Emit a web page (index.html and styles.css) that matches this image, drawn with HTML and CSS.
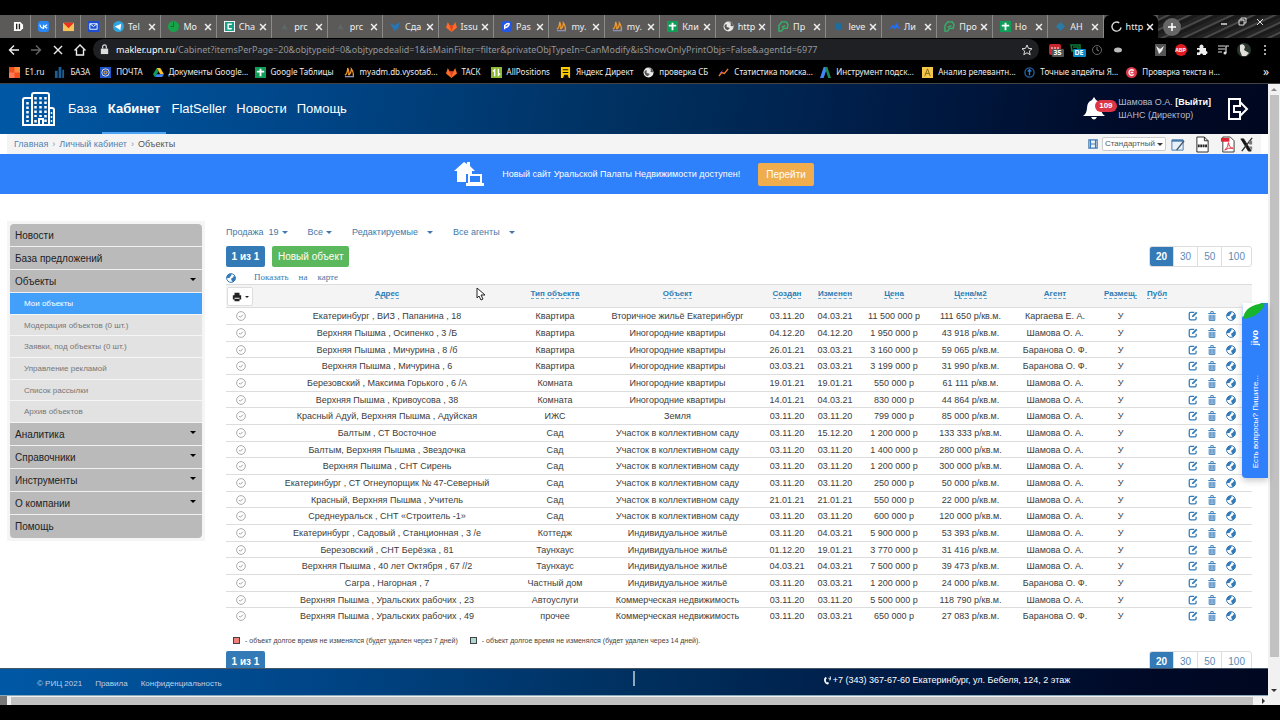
FILE: index.html
```html
<!DOCTYPE html>
<html lang="ru">
<head>
<meta charset="utf-8">
<meta name="viewport" content="width=device-width, initial-scale=1">
<title>Личный кабинет — Объекты</title>
<link rel="stylesheet" href="styles.css">
</head>
<body>
<svg class="sprite" aria-hidden="true">
  <symbol id="x" viewBox="0 0 12 12"><path d="M2.500 2.500l7 7M9.500 2.500l-7 7" stroke="currentColor" stroke-width="1.8" fill="none"/></symbol>
  <symbol id="gitlab" viewBox="0 0 12 12"><path d="M6 12L0 7l2-6 2 4h4l2-4 2 6z" fill="#fc6d26"/><path d="M6 12L4 5h4z" fill="#e24329"/></symbol>
  <symbol id="sheet" viewBox="0 0 12 12"><path d="M0 0h12v12H0z" fill="#0f9d58"/><path d="M6 2v8M2 5h8" stroke="#fff" stroke-width="2"/></symbol>
  <symbol id="pma" viewBox="0 0 12 12"><path d="M1 9Q4 7 4 1q2 4 1 8M5 9q3-2 3-7 3 4 2 8" fill="none" stroke="#f29a2e" stroke-width="1.4"/><path d="M1 10.500h10" stroke="#8b8fb0" stroke-width="1.500"/></symbol>
  <symbol id="world" viewBox="0 0 12 12"><circle cx="6" cy="6" r="5.500" fill="#e8e8e8"/><path d="M2 4q3-1 2 1t2 2-1 3Q2 9 1.500 6zM6 1.500L9 3 8 5l2 1 1-1-1-3z" fill="#555"/></symbol>
  <symbol id="leaf" viewBox="0 0 12 12"><path d="M1 11V5l3-4h5l2 3-1 4H6l-2 3zM4 7l4-2" fill="none" stroke="#34b36a" stroke-width="1.500"/></symbol>
  <symbol id="bird" viewBox="0 0 12 12"><path d="M0 2l5 3 6-4-2 7-4 3-3-5z" fill="#2377b8"/></symbol>
  <symbol id="globe" viewBox="0 0 16 16"><circle cx="8" cy="8" r="7" fill="#fff" stroke="currentColor" stroke-width="1.600"/><path d="M1 8l1-5 4-2 3 1-1 3-2 1 0 2-2 0zM8 9l3-2 2-3 2 3v4l-4 4-2-3z" fill="currentColor"/></symbol>
  <symbol id="edit" viewBox="0 0 16 16"><path d="M10 2H4Q2 2 2 4v8q0 2 2 2h7q2 0 2-2V9" fill="none" stroke="currentColor" stroke-width="2"/><path d="M6 10l1-3 6-6 2 2-6 6z" fill="currentColor"/></symbol>
  <symbol id="trash" viewBox="0 0 16 16"><path d="M2 4h12M6 3V1h4v2M3.500 6v9h9V6M6 6v8M8 6v8M10 6v8" fill="none" stroke="currentColor" stroke-width="1.500"/></symbol>
  <symbol id="check" viewBox="0 0 16 16"><circle cx="8" cy="8" r="7" fill="none" stroke="currentColor" stroke-width="1.300"/><path d="M5 8l2 2 4-4" fill="none" stroke="currentColor" stroke-width="1.500"/></symbol>
</svg>

<div class="browser">
  <div class="tabstrip">
    <div class="pins">
      <span class="pin"><svg viewBox="0 0 12 12"><path d="M1 1h7l3 3v4l-3 3H1z" fill="#fff"/><path d="M4 3v6M7 3v6" stroke="#222" stroke-width="1.500"/></svg></span>
      <span class="pin"><svg viewBox="0 0 12 12"><rect width="12" height="12" rx="3" fill="#2787f5"/><path d="M2 4q1 4 4 4V4M10 4L7 6l3 2" fill="none" stroke="#fff" stroke-width="1.300"/></svg></span>
      <span class="pin"><svg viewBox="0 0 12 12"><path d="M0 2h12v9H0z" fill="#f6c35a"/><path d="M0 2h12L6 8z" fill="#e8331f"/></svg></span>
      <span class="pin"><svg viewBox="0 0 12 12"><path d="M0 0h12v12H0z" fill="#1c4fd0"/><path d="M2 3h8v6H2zM2 3l4 3 4-3" fill="none" stroke="#fff"/></svg></span>
    </div>
    <div class="tabs">
      <div class="tab"><svg viewBox="0 0 12 12"><circle cx="6" cy="6" r="6" fill="#2ca5e0"/><path d="M2 6l7-3-1 7-3-2z" fill="#fff"/></svg><span class="tab-title">Tel</span><button class="close" aria-label="Закрыть"><svg><use href="#x"/></svg></button></div>
      <div class="tab"><svg viewBox="0 0 12 12"><circle cx="6" cy="6" r="6" fill="#16a34a"/><path d="M6 1v5H3" stroke="#0a6b2c" fill="none"/></svg><span class="tab-title">Мо</span><button class="close" aria-label="Закрыть"><svg><use href="#x"/></svg></button></div>
      <div class="tab"><svg viewBox="0 0 12 12"><path d="M0 0h12v12H0z" fill="#fff"/><path d="M1 1h10v10H1z" fill="#1b9e84"/><path d="M8.500 3.500h-4v5h4" fill="none" stroke="#fff" stroke-width="1.500"/></svg><span class="tab-title">Cha</span><button class="close" aria-label="Закрыть"><svg><use href="#x"/></svg></button></div>
      <div class="tab"><svg viewBox="0 0 12 12"><path d="M3 9l3-6 3 6" fill="#5d6868"/></svg><span class="tab-title">prc</span><button class="close" aria-label="Закрыть"><svg><use href="#x"/></svg></button></div>
      <div class="tab"><svg viewBox="0 0 12 12"><path d="M3 9l3-6 3 6" fill="#5d6868"/></svg><span class="tab-title">prc</span><button class="close" aria-label="Закрыть"><svg><use href="#x"/></svg></button></div>
      <div class="tab"><svg><use href="#bird"/></svg><span class="tab-title">Сда</span><button class="close" aria-label="Закрыть"><svg><use href="#x"/></svg></button></div>
      <div class="tab"><svg><use href="#gitlab"/></svg><span class="tab-title">Issu</span><button class="close" aria-label="Закрыть"><svg><use href="#x"/></svg></button></div>
      <div class="tab"><svg viewBox="0 0 12 12"><rect width="12" height="12" rx="4" fill="#2456e6"/><path d="M4 9V5q3-3 5-2-1 4-5 4" stroke="#fff" stroke-width="1.500" fill="none"/></svg><span class="tab-title">Pas</span><button class="close" aria-label="Закрыть"><svg><use href="#x"/></svg></button></div>
      <div class="tab"><svg><use href="#pma"/></svg><span class="tab-title">my.</span><button class="close" aria-label="Закрыть"><svg><use href="#x"/></svg></button></div>
      <div class="tab"><svg><use href="#pma"/></svg><span class="tab-title">my.</span><button class="close" aria-label="Закрыть"><svg><use href="#x"/></svg></button></div>
      <div class="tab"><svg><use href="#sheet"/></svg><span class="tab-title">Кли</span><button class="close" aria-label="Закрыть"><svg><use href="#x"/></svg></button></div>
      <div class="tab"><svg><use href="#world"/></svg><span class="tab-title">http</span><button class="close" aria-label="Закрыть"><svg><use href="#x"/></svg></button></div>
      <div class="tab"><svg><use href="#leaf"/></svg><span class="tab-title">Пр</span><button class="close" aria-label="Закрыть"><svg><use href="#x"/></svg></button></div>
      <div class="tab"><svg viewBox="0 0 12 12"><circle cx="6" cy="6" r="4" fill="#1c6e9c"/></svg><span class="tab-title">leve</span><button class="close" aria-label="Закрыть"><svg><use href="#x"/></svg></button></div>
      <div class="tab"><svg viewBox="0 0 12 12"><path d="M0 9l4-5 2 2 2-4 4 7-4-2-2 2-2-2z" fill="#1f6fff"/></svg><span class="tab-title">Ли</span><button class="close" aria-label="Закрыть"><svg><use href="#x"/></svg></button></div>
      <div class="tab"><svg><use href="#leaf"/></svg><span class="tab-title">Про</span><button class="close" aria-label="Закрыть"><svg><use href="#x"/></svg></button></div>
      <div class="tab"><svg><use href="#sheet"/></svg><span class="tab-title">Но</span><button class="close" aria-label="Закрыть"><svg><use href="#x"/></svg></button></div>
      <div class="tab"><svg viewBox="0 0 12 12"><path d="M1 6l5-5 5 5-5 5z" fill="#2a7aa5"/></svg><span class="tab-title">АН</span><button class="close" aria-label="Закрыть"><svg><use href="#x"/></svg></button></div>
      <div class="tab active"><svg viewBox="0 0 12 12"><path d="M9 2a5 5 0 1 0 2 5" fill="none" stroke="#ddd" stroke-width="1.500"/></svg><span class="tab-title">http</span><button class="close" aria-label="Закрыть"><svg><use href="#x"/></svg></button></div>
    </div>
    <div class="window-controls">
      <button class="new-tab" aria-label="Новая вкладка"><svg viewBox="0 0 12 12"><path d="M6 2v8M2 6h8" stroke="#fff" stroke-width="1.500"/></svg></button>
      <button aria-label="Свернуть"><svg viewBox="0 0 12 12"><path d="M3 8h6" stroke="#ddd" stroke-width="1.500"/></svg></button>
      <button aria-label="Окно"><svg viewBox="0 0 12 12"><path d="M3 4h5v5H3zM5 4V2h5v5H8" stroke="#ddd" fill="none"/></svg></button>
      <button aria-label="Закрыть окно"><svg viewBox="0 0 12 12"><path d="M3 3l6 6M9 3L3 9" stroke="#ddd"/></svg></button>
    </div>
  </div>

  <div class="toolbar">
    <div class="nav-buttons">
      <button aria-label="Назад"><svg viewBox="0 0 12 12"><path d="M11 6H2M6 1.500L1.500 6 6 10.500" fill="none" stroke="#eee" stroke-width="1.400"/></svg></button>
      <button aria-label="Вперёд"><svg viewBox="0 0 12 12"><path d="M1 6h9M6 1.500L10.500 6 6 10.500" fill="none" stroke="#666" stroke-width="1.400"/></svg></button>
      <button aria-label="Остановить"><svg viewBox="0 0 12 12"><path d="M2 2l8 8M10 2l-8 8" stroke="#eee" stroke-width="1.400"/></svg></button>
      <button aria-label="Домой"><svg viewBox="0 0 12 12"><path d="M0.500 6.500L6 1l5.500 5.500M2.500 5.500V11h7V5.500" fill="none" stroke="#eee" stroke-width="1.400"/></svg></button>
    </div>
    <div class="address">
      <svg class="lock" viewBox="0 0 12 12"><path d="M2 5h8v6H2z" fill="#ddd"/><path d="M4 5V3a2 2 0 0 1 4 0v2" fill="none" stroke="#ddd" stroke-width="1.300"/></svg>
      <span class="url"><span class="host">makler.upn.ru</span>/Cabinet?itemsPerPage=20&amp;objtypeid=0&amp;objtypedealid=1&amp;isMainFilter=filter&amp;privateObjTypeIn=CanModify&amp;isShowOnlyPrintObjs=False&amp;agentId=6977</span>
      <svg class="star" viewBox="0 0 12 12"><path d="M6 1l1.500 3.400 3.500.3-2.700 2.400.9 3.600L6 8.800l-3.200 1.900.9-3.600L1 4.700l3.500-.3z" fill="none" stroke="#ddd"/></svg>
    </div>
    <div class="extensions">
      <span class="ext"><svg viewBox="0 0 12 12"><rect width="12" height="11" rx="2" fill="#c9252d"/><path d="M2 4h8" stroke="#fff" stroke-dasharray="2 1"/></svg><span class="ext-badge gray">35</span></span>
      <span class="ext"><svg viewBox="0 0 12 12"><path d="M1 1h9v5L7 9 4 7H2zM3 3h5v3" fill="none" stroke="#0a7a34" stroke-width="1.600"/></svg><span class="ext-badge cyan">DE</span></span>
      <svg viewBox="0 0 12 12"><circle cx="6" cy="6" r="4.500" fill="none" stroke="#666"/><path d="M6 3v3l2 1" stroke="#777" fill="none"/></svg>
      <svg viewBox="0 0 12 12"><ellipse cx="6" cy="6" rx="4" ry="2.500" fill="#bbb"/></svg>
      <span></span>
      <svg viewBox="0 0 12 12"><path d="M1 0h11v12H1z" fill="#555"/><path d="M2 2l4 3 4-3-2 5-3 3z" fill="#eee"/></svg>
      <span class="abp">ABP</span>
      <svg viewBox="0 0 12 12"><path d="M1 4h3a2 2 0 1 1 3 0h3v3a1.500 1.500 0 1 1 0 3v1H7a1.500 1.500 0 1 0-3 0H1V8a1.500 1.500 0 1 0 0-2z" fill="#eee"/></svg>
      <svg viewBox="0 0 12 12"><path d="M1 2h7M1 5h7M1 8h4M9 9V2h3" fill="none" stroke="#ddd" stroke-width="1.200"/><circle cx="8" cy="9" r="1.500" fill="#ddd"/></svg>
      <svg class="avatar" viewBox="0 0 14 14"><circle cx="7" cy="7" r="7" fill="#29372f"/><path d="M3 2q4-2 5 2l-1 3 5 3-3 3H5L3 8z" fill="#e2ded8"/></svg>
      <svg viewBox="0 0 12 12"><circle cx="6" cy="2" r="1" fill="#ddd"/><circle cx="6" cy="6" r="1" fill="#ddd"/><circle cx="6" cy="10" r="1" fill="#ddd"/></svg>
    </div>
  </div>

  <nav class="bookmarks" aria-label="Закладки">
    <a href="#"><svg viewBox="0 0 12 12"><path d="M0 0h12v12H0z" fill="#f0501e"/><path d="M6 0h6v6H6z" fill="#ff8a3c"/><path d="M0 6h6v6H0z" fill="#ff7b55"/></svg><span>E1.ru</span></a>
    <a href="#"><svg viewBox="0 0 12 12"><path d="M1 12V4h3v8M5 12V0h3v12M9 12V3h2v9" fill="#1c5f97"/></svg><span>БАЗА</span></a>
    <a href="#"><svg viewBox="0 0 12 12"><path d="M0 0h12v12H0z" fill="#2056c6"/><circle cx="6" cy="6" r="4" fill="none" stroke="#ddd"/><circle cx="6" cy="6" r="1.600" fill="none" stroke="#f5b042"/></svg><span>ПОЧТА</span></a>
    <a href="#" class="long"><svg viewBox="0 0 12 12"><path d="M4 1h4l4 7H8z" fill="#fbc02d"/><path d="M4 1L0 8l2 3 4-6z" fill="#0f9d58"/><path d="M4 8h8l-2 3H2z" fill="#4285f4"/></svg><span>Документы Google...</span></a>
    <a href="#"><svg><use href="#sheet"/></svg><span>Google Таблицы</span></a>
    <a href="#" class="long"><svg><use href="#pma"/></svg><span>myadm.db.vysotaб...</span></a>
    <a href="#"><svg><use href="#gitlab"/></svg><span>ТАСК</span></a>
    <a href="#"><svg viewBox="0 0 12 12"><path d="M0 0h12v12H0z" fill="#8bb92f"/><path d="M4 10V3L2 5M8 2v7l2-2" stroke="#fff" stroke-width="1.500" fill="none"/></svg><span>AllPositions</span></a>
    <a href="#"><svg viewBox="0 0 12 12"><path d="M1 0h10v12H1z" fill="#ffcc00"/><path d="M3 3h6M3 6h6M4 12l1-3h3l1 3z" stroke="#111" stroke-width="1.200"/></svg><span>Яндекс Директ</span></a>
    <a href="#"><svg><use href="#world"/></svg><span>проверка СБ</span></a>
    <a href="#" class="long"><svg viewBox="0 0 12 12"><path d="M1 10l3-4 3 1 4-5" fill="none" stroke="#f07a28" stroke-width="1.500"/><path d="M2 7l3-3" stroke="#7a4df0"/></svg><span>Статистика поиска...</span></a>
    <a href="#" class="long"><svg viewBox="0 0 12 12"><path d="M4 0h4L4 12H0z" fill="#4285f4"/><path d="M5 0h3l4 12H9z" fill="#188c52"/></svg><span>Инструмент подск...</span></a>
    <a href="#" class="long"><svg viewBox="0 0 12 12"><path d="M0 0h12v12H0z" fill="#f3c84b"/><path d="M3 10l3-8 3 8M4 7h4" fill="none" stroke="#846312"/></svg><span>Анализ релевантн...</span></a>
    <a href="#" class="long"><svg viewBox="0 0 12 12"><circle cx="6" cy="6" r="5" fill="none" stroke="#2464ad" stroke-width="1.400"/><path d="M6 9V3M4 5l2-2 2 2" fill="none" stroke="#2e78c7" stroke-width="1.500"/></svg><span>Точные апдейты Я...</span></a>
    <a href="#" class="long"><svg viewBox="0 0 12 12"><circle cx="6" cy="6" r="6" fill="#e23b4e"/><path d="M8.500 4a3 3 0 1 0 0 4M5 6h3" fill="none" stroke="#fff" stroke-width="1.400"/></svg><span>Проверка текста н...</span></a>
    <button class="more" aria-label="Другие закладки">»</button>
  </nav>

  <div class="viewport">
    <div class="page">
      <header class="site-header">
        <a href="#" class="logo" aria-label="Главная"><svg viewBox="0 0 34 36"><path d="M2 34V9q0-2 2-2h7M11 34V4q0-2 2-2h13q2 0 2 2v30M28 17h3q2 0 2 2v15H1M18 34v-6h4v6" fill="none" stroke="#fff" stroke-width="2"/><path d="M14.500 6v20M19.500 6v20M24.500 6v26M14.500 29v3M6.500 11v20" stroke="#fff" stroke-width="2.500" stroke-dasharray="2.500 2"/><path d="M30.500 21v10" stroke="#fff" stroke-width="1.500" stroke-dasharray="2 2"/></svg></a>
        <nav class="main-nav">
          <a href="#">База</a><a href="#" class="current">Кабинет</a><a href="#">FlatSeller</a><a href="#">Новости</a><a href="#">Помощь</a>
        </nav>
        <div class="account">
          <button class="bell" aria-label="Уведомления"><svg viewBox="0 0 22 24"><path d="M11 0l2 3q5 2 5 8 0 5 4 8H0q4-3 4-8 0-6 5-8z" fill="#fff"/><path d="M8 20h6q-3 5-6 0z" fill="#fff"/></svg><span class="count">109</span></button>
          <div class="user"><div>Шамова О.А. <a href="#">[Выйти]</a></div><div>ШАНС (Директор)</div></div>
          <a href="#" class="logout" aria-label="Выйти"><svg viewBox="0 0 22 24"><path d="M13 6V2H2v20h11v-4" fill="none" stroke="#fff" stroke-width="2"/><path d="M7 9h6V5l7 7-7 7v-4H7z" fill="none" stroke="#fff" stroke-width="2"/></svg></a>
        </div>
      </header>

      <div class="crumb-bar">
        <nav class="crumbs"><a href="#">Главная</a><span>›</span><a href="#">Личный кабинет</a><span>›</span><b>Объекты</b></nav>
        <div class="view-tools">
          <svg class="save" viewBox="0 0 12 12"><path d="M1 1h10v10H1zM3 1v10M9 1v10M3 6h6" fill="none" stroke="#3e79b4" stroke-width="1.400"/></svg>
          <span class="select-wrap"><select aria-label="Вид"><option>Стандартный</option></select><i class="caret"></i></span>
          <button aria-label="Настроить"><svg viewBox="0 0 16 16"><path d="M2 3h12v11H2z" fill="#e8f1fa" stroke="#4879aa"/><path d="M2 3h12v2H2z" fill="#4879aa"/><path d="M7 14l8-10" stroke="#456" stroke-width="1.300"/></svg></button>
          <button class="wide" aria-label="HTML"><svg viewBox="0 0 16 18"><path d="M2 1h8l4 4v12H2zM10 1v4h4" fill="#fff" stroke="#222"/><path d="M3 10.500h10" stroke="#222" stroke-width="3" stroke-dasharray="2 .6"/></svg></button>
          <button class="wide" aria-label="PDF"><svg viewBox="0 0 16 18"><path d="M3 1h8l4 4v12H3z" fill="#fff" stroke="#333"/><path d="M1 2h9v4H1z" fill="#e02234"/><path d="M5 15q4-3 4-8 1 6 5 6-5-1-9 2" fill="none" stroke="#e02234"/></svg></button>
          <button aria-label="Excel"><svg viewBox="0 0 16 18"><path d="M2 3h3l8 13h-3z" fill="#111" stroke="#222"/><path d="M14 2L3 16" stroke="#333" stroke-width="1.500"/><path d="M10 5h4v4h-3zM10 11h4v4z" fill="#777"/></svg></button>
        </div>
      </div>

      <div class="banner">
        <svg viewBox="0 0 30 26"><path d="M0 10L10 1l3 2V1h3v4l5 5h-3v3h-6v8H3V10z" fill="#fff"/><path d="M15 14h12v8H15z" fill="#2f80fb" stroke="#fff" stroke-width="2"/><path d="M12 22h18v3H12z" fill="#fff"/></svg>
        <span>Новый сайт Уральской Палаты Недвижимости доступен!</span>
        <button>Перейти</button>
      </div>

      <main class="content">
        <aside class="sidebar">
          <ul class="menu">
            <li><a href="#">Новости</a></li>
            <li><a href="#">База предложений</a></li>
            <li><a href="#">Объекты<i class="caret"></i></a>
              <ul class="submenu">
                <li class="selected"><a href="#">Мои объекты</a></li>
                <li><a href="#">Модерация объектов (0 шт.)</a></li>
                <li><a href="#">Заявки, под объекты (0 шт.)</a></li>
                <li><a href="#">Управление рекламой</a></li>
                <li><a href="#">Список рассылки</a></li>
                <li><a href="#">Архив объектов</a></li>
              </ul>
            </li>
            <li><a href="#">Аналитика<i class="caret"></i></a></li>
            <li><a href="#">Справочники<i class="caret"></i></a></li>
            <li><a href="#">Инструменты<i class="caret"></i></a></li>
            <li><a href="#">О компании<i class="caret"></i></a></li>
            <li><a href="#">Помощь</a></li>
          </ul>
        </aside>

        <section class="listing">
          <div class="filters">
            <button>Продажа&nbsp; 19<i class="caret near"></i></button>
            <button>Все<i class="caret near"></i></button>
            <button>Редактируемые<i class="caret"></i></button>
            <button>Все агенты<i class="caret"></i></button>
          </div>
          <div class="actions">
            <button class="page-of">1 из 1</button>
            <button class="create">Новый объект</button>
            <div class="page-sizes"><button class="on">20</button><button>30</button><button>50</button><button>100</button></div>
          </div>
          <a href="#" class="map-link"><svg><use href="#globe"/></svg><span>Показать</span><span>на</span><span>карте</span></a>
          <table>
            <colgroup><col class="c-mark"><col class="c-addr"><col class="c-type"><col class="c-obj"><col class="c-date"><col class="c-date"><col class="c-price"><col class="c-sqm"><col class="c-agent"><col class="c-place"><col class="c-pub"><col class="c-act"></colgroup>
            <thead><tr>
              <th><button class="print" aria-label="Печать"><svg viewBox="0 0 12 12"><path d="M3 1h6v3H3zM1 4h10v5H9V7H3v2H1zM3 8h6v3H3z" fill="#222"/></svg><i class="caret"></i></button></th>
              <th><a href="#">Адрес</a></th><th><a href="#">Тип объекта</a></th><th><a href="#">Объект</a></th><th><a href="#">Создан</a></th><th><a href="#">Изменен</a></th><th><a href="#">Цена</a></th><th><a href="#">Цена/м2</a></th><th><a href="#">Агент</a></th><th><a href="#">Размещ.</a></th><th><a href="#">Публ</a></th><th></th>
            </tr></thead>
            <tbody id="rows"></tbody>
          </table>
          <div class="legend"><i class="swatch red"></i><span>- объект долгое время не изменялся (будет удален через 7 дней)</span><i class="swatch teal"></i><span>- объект долгое время не изменялся (будет удален через 14 дней).</span></div>
          <div class="actions">
            <button class="page-of">1 из 1</button>
            <div class="page-sizes"><button class="on">20</button><button>30</button><button>50</button><button>100</button></div>
          </div>
        </section>
      </main>

      <footer class="site-footer">
        <div class="footer-links"><span>© РИЦ 2021</span><a href="#">Правила</a><a href="#">Конфиденциальность</a></div>
        <i class="divider"></i>
        <div class="contacts"><svg viewBox="0 0 12 12"><path d="M4 1Q0 3 2 8q2 4 5 3l1-2-2-1-1 1Q3 6 4 4h1z" fill="#fff"/><path d="M7 3h2v3M9 1h1v4" stroke="#fff" fill="none"/></svg><span>+7 (343) 367-67-60 Екатеринбург, ул. Бебеля, 124, 2 этаж</span></div>
      </footer>

      <button class="chat"><svg class="chat-leaf" viewBox="0 0 26 18"><path d="M0 0h20L0 15z" fill="#fff"/><path d="M1 17Q2 2 24 0 20 14 1 17z" fill="#16b52c"/></svg><span class="chat-label">Есть вопросы? Пишите...</span><span class="chat-brand">jivo</span></button>
      <svg class="cursor" viewBox="0 0 10 14"><path d="M1 1v10l2-2 2 4 2-1-2-4h4z" fill="#fff" stroke="#222"/></svg>
    </div>
    <div class="vbar"><i class="arrow up"></i><div class="vthumb"></div><i class="arrow down"></i></div>
  </div>
  <div class="hbar"><i class="hstart"></i><div class="hthumb"></div><i class="arrow right"></i></div>
</div>
<script src="app.js"></script>
</body>
</html>
```

FILE: styles.css
```css
* { box-sizing: border-box; }
body { margin: 0; background: #000; font-family: "Liberation Sans", Arial, sans-serif; font-size: 10px; color: #3c3c3c; }
button { font: inherit; color: inherit; background: none; border: 0; padding: 0; margin: 0; cursor: pointer; }
a { color: inherit; text-decoration: none; }
ul { list-style: none; margin: 0; padding: 0; }
svg { display: block; flex: none; width: 12px; height: 12px; }
.sprite { position: absolute; width: 0; height: 0; }
.caret { display: inline-block; flex: none; border: 3px solid transparent; border-top-color: currentColor; border-bottom: 0; }

/* Browser frame */
.browser { height: 100vh; display: flex; flex-direction: column; padding: 15px 0; overflow: hidden; }
.tabstrip { display: flex; height: 23px; flex: none; color: #eee; background: #5b5a59; font: 9px/22px "Noto Sans", sans-serif; }
.pins { display: flex; padding-left: 6px; }
.pin { width: 25px; display: flex; align-items: center; justify-content: center; border-right: 1px solid #8a8a8a; }
.pin svg { width: 11px; height: 11px; }
.tabs { display: flex; flex: 1; min-width: 0; }
.tab { flex: 1 1 0; min-width: 0; display: flex; align-items: center; padding: 0 3px 0 7px; border-right: 1px solid #8a8a8a; }
.tab > svg { width: 11px; height: 11px; }
.tab-title { flex: 1; min-width: 0; margin-left: 4px; white-space: nowrap; }
.close { margin-left: 2px; }
.close svg { width: 10px; height: 10px; }
.tab.active { background: #000; border: 0; border-radius: 6px 6px 0 0; }
.window-controls { display: flex; align-items: center; width: 122px; padding-left: 5px; background: repeating-linear-gradient(155deg, #242424 0 3px, #484848 4px 5px, #1b1b1b 6px 9px); }
.window-controls button { width: 18px; display: flex; justify-content: center; align-self: flex-start; padding-top: 1px; }
.window-controls .new-tab { height: 18px; margin-right: 34px; padding: 0; align-items: center; align-self: center; background: #666; border-radius: 50%; }

.toolbar { display: flex; align-items: center; height: 23px; flex: none; padding: 1px 5px 1px 3px; }
.nav-buttons { display: flex; width: 90px; }
.nav-buttons button { width: 22px; display: flex; justify-content: center; }
.address { flex: 1; min-width: 0; display: flex; align-items: center; height: 21px; padding: 0 6px; background: #1f2023; border-radius: 11px; }
.lock { width: 11px; height: 11px; }
.url { flex: 1; min-width: 0; white-space: nowrap; padding-left: 6px; color: #93969a; font: 9px/16px "Noto Sans", sans-serif; }
.host { color: #fff; }
.extensions { display: grid; grid-template-columns: repeat(11, 21px); align-items: center; justify-items: center; padding-left: 5px; }
.ext { position: relative; }
.ext-badge { position: absolute; left: 3px; top: 5px; padding: 0 2px; border-radius: 1px; font: bold 7px/8px "Noto Sans", sans-serif; color: #fff; }
.gray { background: #555; }
.cyan { background: #0b86c9; }
.abp { width: 12px; height: 12px; border-radius: 50%; background: #e01b22; color: #fff; font: bold 5px/12px "Liberation Sans", sans-serif; text-align: center; }
.avatar { width: 14px; height: 14px; }

.bookmarks { display: flex; align-items: center; gap: 10px; height: 22px; flex: none; padding: 0 11px 0 9px; color: #eee; font: 8px/14px "Noto Sans", sans-serif; white-space: nowrap; }
.bookmarks a { display: flex; align-items: center; gap: 5px; }
.bookmarks svg { width: 11px; height: 11px; }
.bookmarks .long { width: 92px; }
.more { margin-left: auto; font-size: 12px; }

/* Page frame */
.viewport { display: flex; flex: 1; min-height: 0; border-top: 1px solid #444; }
.page { position: relative; flex: 1; min-width: 0; display: flex; flex-direction: column; background: #fff; }
.vbar { width: 12px; display: flex; flex-direction: column; align-items: center; justify-content: space-between; background: #f1f1f1; padding: 4px 0; }
.vthumb { width: 9px; flex: 1; margin: 4px 0 32px; background: #c1c1c1; }
.arrow { border: 3px solid transparent; }
.up { border-bottom-color: #888; border-top: 0; }
.down { border-top-color: #333; border-bottom: 0; }
.right { border-left-color: #333; border-right: 0; }
.hbar { display: flex; align-items: center; gap: 9px; height: 9px; flex: none; padding-right: 15px; background: #f1f1f1; }
.hstart { width: 7px; height: 9px; background: #777; margin-right: -5px; }
.hthumb { flex: 1; height: 8px; background: #c1c1c1; }

.site-header, .site-footer { flex: none; color: #fff; background: linear-gradient(100deg, #0058a4 0%, #004587 25%, #00305f 50%, #001c46 70%, #000b29 88%, #000720 100%); }
.site-header { display: flex; align-items: center; height: 50px; padding: 0 19px 0 21px; }
.logo svg { width: 34px; height: 36px; }
.main-nav { display: flex; align-self: stretch; margin-left: 8px; font-size: 13px; line-height: 50px; }
.main-nav a { padding: 0 5px; }
.main-nav .current { font-weight: bold; padding: 0 6px; border-bottom: 2px solid #4ea4f5; }
.account { display: flex; align-items: center; margin-left: auto; }
.bell { position: relative; margin-right: 13px; }
.bell svg { width: 22px; height: 24px; }
.count { position: absolute; left: 12px; top: 3px; padding: 0 4px; border-radius: 6px; background: #dc3545; font: bold 8px/12px "Liberation Sans", sans-serif; }
.user { color: #b5bccb; font-size: 9px; line-height: 13px; }
.user a { color: #fff; font-weight: bold; }
.logout { margin-left: 16px; }
.logout svg { width: 22px; height: 24px; }

.crumb-bar { display: flex; align-items: center; justify-content: space-between; height: 20px; flex: none; margin: 0 7px; padding: 0 7px; background: #f4f4f4; }
.crumbs { display: flex; gap: 4px; color: #8899aa; font-size: 9px; }
.crumbs a { color: #5284b5; }
.crumbs b { font-weight: normal; color: #555; }
.view-tools { display: flex; align-items: center; gap: 4px; }
.view-tools .save { width: 10px; height: 10px; }
.view-tools svg { width: 15px; height: 17px; }
.view-tools .wide { margin-left: 6px; }
.select-wrap { position: relative; }
.select-wrap select { display: block; appearance: none; height: 14px; width: 64px; padding: 0 2px; border: 1px solid #ccc; border-radius: 2px; background: #fff; color: #555; font: 8px/12px "Liberation Sans", sans-serif; }
.select-wrap .caret { position: absolute; right: 3px; top: 6px; }

.banner { display: flex; align-items: center; justify-content: center; gap: 18px; height: 40px; flex: none; background: #2f80fb; color: #fff; font-size: 9px; }
.banner svg { width: 30px; height: 26px; }
.banner button { padding: 0 8px; border-radius: 2px; background: #f0ad4e; font-size: 10px; line-height: 23px; }

/* Content */
.content { flex: 1; min-height: 0; overflow: hidden; display: flex; align-items: flex-start; gap: 21px; padding: 27px 16px 0 7px; }
.sidebar { width: 198px; flex: none; padding: 3px; background: #f5f5f5; }
.menu { border-radius: 4px; overflow: hidden; color: #222; }
.menu > li > a { display: flex; justify-content: space-between; align-items: center; height: 23px; padding: 0 6px 0 5px; background: #bababa; border-bottom: 1px solid #f0f0f0; }
.menu > li:last-child > a { border: 0; }
.menu .caret { color: #000; margin-bottom: 3px; }
.submenu { display: flex; flex-direction: column; height: 130px; font-size: 8px; color: #777; }
.submenu li { flex: 1; display: flex; align-items: center; padding-left: 14px; background: #e2e2e2; border-bottom: 1px solid #f5f5f5; }
.submenu .selected { background: #43a0fa; color: #fff; }

.listing { flex: 1; min-width: 0; }
.filters { display: flex; align-items: center; gap: 20px; height: 21px; color: #4578a8; font-size: 9px; }
.filters .caret { margin-left: 9px; vertical-align: middle; }
.filters .near { margin-left: 3px; }
.actions { display: flex; align-items: center; gap: 7px; padding-top: 4px; }
.actions button { height: 21px; }
.page-of, .create { color: #fff; border-radius: 2px; }
.page-of { width: 39px; background: #337ab7; font-weight: bold; }
.create { padding: 0 6px; background: #5cb85c; }
.page-sizes { display: flex; margin-left: auto; border: 1px solid #ddd; border-radius: 3px; overflow: hidden; color: #5c8ab5; }
.page-sizes button { height: 19px; padding: 0 6px; border-left: 1px solid #ddd; }
.page-sizes .on { background: #337ab7; color: #fff; border: 0; font-weight: bold; }
.map-link { display: flex; align-items: center; gap: 10px; height: 17px; padding-top: 4px; color: #4578a8; font: 9px/13px "Liberation Serif", serif; }
.map-link svg { width: 10px; height: 10px; margin-right: 8px; color: #337ab7; }

table { width: 100%; table-layout: fixed; border-collapse: collapse; text-align: center; white-space: nowrap; font-size: 9px; }
.c-mark { width: 30px; }
.c-addr { width: 262px; }
.c-type { width: 74px; }
.c-obj { width: 171px; }
.c-date { width: 48px; }
.c-price { width: 70px; }
.c-sqm { width: 83px; }
.c-agent { width: 86px; }
.c-place { width: 45px; }
.c-pub { width: 28px; }
.c-act { width: 81px; }
th, td { padding: 0; line-height: 14px; }
th { height: 23px; background: #f4f4f4; border-top: 1px solid #ddd; font-size: 8px; line-height: 10px; vertical-align: top; padding-top: 4px; }
th:first-child { padding-top: 2px; }
th a { color: #2a7db5; border-bottom: 1px dashed #6fa8d0; }
tbody tr { height: 17px; border-top: 1px solid #ddd; }
tbody tr:nth-child(3n) { height: 16px; }
.print { display: flex; align-items: center; justify-content: center; gap: 3px; width: 26px; height: 19px; margin-left: 1px; background: #fff; border: 1px solid #ddd; border-radius: 2px; color: #222; }
.print svg { width: 10px; height: 10px; }
.print .caret { border-width: 2px; border-bottom: 0; }
.mark { width: 10px; height: 10px; margin-left: 10px; color: #999; }
.row-actions { display: flex; gap: 9px; padding-left: 17px; color: #337ab7; }
.row-actions svg { width: 10px; height: 10px; }

.legend { display: flex; align-items: center; gap: 5px; height: 22px; padding: 10px 0 0 7px; font-size: 7px; color: #444; }
.swatch { width: 7px; height: 7px; border: 1px solid #444; }
.red { background: #f08078; }
.teal { background: #a9d8d5; margin-left: 7px; }

.site-footer { display: grid; grid-template-columns: 1fr 2px 1fr; height: 28px; border-top: 1px solid #456; border-bottom: 1px solid #8ab; font-size: 9px; }
.footer-links { display: flex; align-items: center; gap: 13px; padding: 2px 0 0 37px; font-size: 8px; color: #bcd0e6; }
.divider { height: 15px; margin-top: 2px; background: #8fa8c0; }
.contacts { display: flex; justify-content: center; align-items: center; gap: 1px; padding: 0 10px 4px 0; }
.contacts svg { width: 9px; height: 9px; }

/* Floating layer */
.chat { position: absolute; right: 0; top: 219px; width: 26px; height: 175px; display: flex; flex-direction: column-reverse; align-items: center; justify-content: flex-start; gap: 29px; padding: 0 0 10px; border-radius: 4px 0 0 4px; background: #2f80fb; color: #fff; box-shadow: 0 3px 6px #0003; font-size: 8px; }
.chat-leaf { position: absolute; left: 0; top: 0; width: 25px; height: 17px; }
.chat-label, .chat-brand { writing-mode: vertical-rl; transform: rotate(180deg); white-space: nowrap; }
.chat-brand { font-size: 9px; font-weight: bold; }
.cursor { position: absolute; left: 476px; top: 203px; width: 10px; height: 14px; }
```

FILE: app.js
```js
const objects = [
  ["Екатеринбург , ВИЗ , Папанина , 18", "Квартира", "Вторичное жильё Екатеринбург", "03.11.20", "04.03.21", "11 500 000 р", "111 650 р/кв.м.", "Каргаева Е. А."],
  ["Верхняя Пышма , Осипенко , 3 /Б", "Квартира", "Иногородние квартиры", "04.12.20", "04.12.20", "1 950 000 р", "43 918 р/кв.м.", "Шамова О. А."],
  ["Верхняя Пышма , Мичурина , 8 /б", "Квартира", "Иногородние квартиры", "26.01.21", "03.03.21", "3 160 000 р", "59 065 р/кв.м.", "Баранова О. Ф."],
  ["Верхняя Пышма , Мичурина , 6", "Квартира", "Иногородние квартиры", "03.03.21", "03.03.21", "3 199 000 р", "31 990 р/кв.м.", "Баранова О. Ф."],
  ["Березовский , Максима Горького , 6 /А", "Комната", "Иногородние квартиры", "19.01.21", "19.01.21", "550 000 р", "61 111 р/кв.м.", "Шамова О. А."],
  ["Верхняя Пышма , Кривоусова , 38", "Комната", "Иногородние квартиры", "14.01.21", "04.03.21", "830 000 р", "44 864 р/кв.м.", "Шамова О. А."],
  ["Красный Адуй, Верхняя Пышма , Адуйская", "ИЖС", "Земля", "03.11.20", "03.11.20", "799 000 р", "85 000 р/кв.м.", "Шамова О. А."],
  ["Балтым , СТ Восточное", "Сад", "Участок в коллективном саду", "03.11.20", "15.12.20", "1 200 000 р", "133 333 р/кв.м.", "Шамова О. А."],
  ["Балтым, Верхняя Пышма , Звездочка", "Сад", "Участок в коллективном саду", "03.11.20", "03.11.20", "1 400 000 р", "280 000 р/кв.м.", "Шамова О. А."],
  ["Верхняя Пышма , СНТ Сирень", "Сад", "Участок в коллективном саду", "03.11.20", "03.11.20", "1 200 000 р", "300 000 р/кв.м.", "Шамова О. А."],
  ["Екатеринбург , СТ Огнеупорщик № 47-Северный", "Сад", "Участок в коллективном саду", "03.11.20", "03.11.20", "250 000 р", "50 000 р/кв.м.", "Шамова О. А."],
  ["Красный, Верхняя Пышма , Учитель", "Сад", "Участок в коллективном саду", "21.01.21", "21.01.21", "550 000 р", "22 000 р/кв.м.", "Шамова О. А."],
  ["Среднеуральск , СНТ «Строитель -1»", "Сад", "Участок в коллективном саду", "03.11.20", "03.11.20", "600 000 р", "120 000 р/кв.м.", "Шамова О. А."],
  ["Екатеринбург , Садовый , Станционная , 3 /е", "Коттедж", "Индивидуальное жильё", "03.11.20", "04.03.21", "5 900 000 р", "53 393 р/кв.м.", "Шамова О. А."],
  ["Березовский , СНТ Берёзка , 81", "Таунхаус", "Индивидуальное жильё", "01.12.20", "19.01.21", "3 770 000 р", "31 416 р/кв.м.", "Шамова О. А."],
  ["Верхняя Пышма , 40 лет Октября , 67 //2", "Таунхаус", "Индивидуальное жильё", "04.03.21", "04.03.21", "7 500 000 р", "39 473 р/кв.м.", "Шамова О. А."],
  ["Сагра , Нагорная , 7", "Частный дом", "Индивидуальное жильё", "03.11.20", "03.03.21", "1 200 000 р", "24 000 р/кв.м.", "Баранова О. Ф."],
  ["Верхняя Пышма , Уральских рабочих , 23", "Автоуслуги", "Коммерческая недвижимость", "03.11.20", "03.11.20", "5 500 000 р", "118 790 р/кв.м.", "Шамова О. А."],
  ["Верхняя Пышма , Уральских рабочих , 49", "прочее", "Коммерческая недвижимость", "03.11.20", "03.03.21", "650 000 р", "27 083 р/кв.м.", "Баранова О. Ф."]
];

const icon = (name) => `<svg><use href="#${name}"/></svg>`;
const action = (name, label) => `<button aria-label="${label}">${icon(name)}</button>`;

document.getElementById("rows").innerHTML = objects.map((cells) => `<tr>
  <td><svg class="mark"><use href="#check"/></svg></td>
  ${cells.map((text) => `<td>${text}</td>`).join("")}
  <td>У</td><td></td>
  <td><div class="row-actions">${action("edit", "Изменить")}${action("trash", "Удалить")}${action("globe", "На карте")}</div></td>
</tr>`).join("");
```
